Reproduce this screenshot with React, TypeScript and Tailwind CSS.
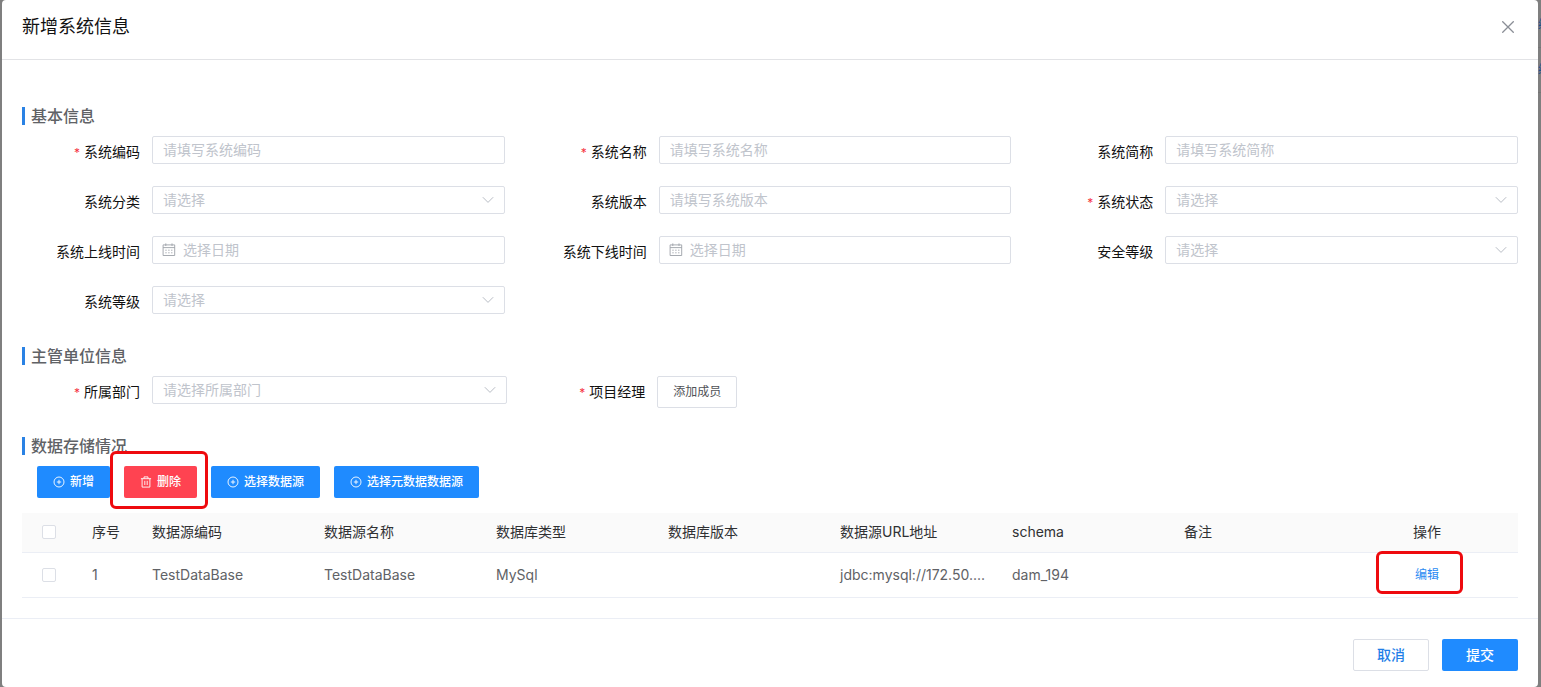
import type { ReactNode } from 'react'

type Field = {
  id: string
  label: string
  type: 'input' | 'select' | 'date'
  placeholder: string
  required?: boolean
}

const basicFields: Field[] = [
  { id: 'code', label: '系统编码', type: 'input', placeholder: '请填写系统编码', required: true },
  { id: 'name', label: '系统名称', type: 'input', placeholder: '请填写系统名称', required: true },
  { id: 'short', label: '系统简称', type: 'input', placeholder: '请填写系统简称' },
  { id: 'category', label: '系统分类', type: 'select', placeholder: '请选择' },
  { id: 'version', label: '系统版本', type: 'input', placeholder: '请填写系统版本' },
  { id: 'status', label: '系统状态', type: 'select', placeholder: '请选择', required: true },
  { id: 'online', label: '系统上线时间', type: 'date', placeholder: '选择日期' },
  { id: 'offline', label: '系统下线时间', type: 'date', placeholder: '选择日期' },
  { id: 'safety', label: '安全等级', type: 'select', placeholder: '请选择' },
  { id: 'level', label: '系统等级', type: 'select', placeholder: '请选择' },
]

const columns = ['数据源编码', '数据源名称', '数据库类型', '数据库版本', '数据源URL地址', 'schema', '备注']

const rows = [
  ['TestDataBase', 'TestDataBase', 'MySql', '', 'jdbc:mysql://172.50....', 'dam_194', ''],
]

function PlusIcon() {
  return (
    <svg className="h-3 w-3" viewBox="0 0 12 12" fill="none" stroke="currentColor" strokeWidth="0.9">
      <circle cx="6" cy="6" r="5" />
      <path d="M6 3.8v4.4M3.8 6h4.4" />
    </svg>
  )
}

function TrashIcon() {
  return (
    <svg className="h-3 w-3" viewBox="0 0 12 12" fill="none" stroke="currentColor" strokeWidth="0.9">
      <path d="M0.9 2.7h10.2M4 2.7V0.9h4v1.8M2.1 2.7v8.4h7.8V2.7M4.8 4.8v4.2M7.2 4.8v4.2" />
    </svg>
  )
}

function CalendarIcon() {
  return (
    <svg className="pointer-events-none absolute top-[7px] left-[10px] h-[14px] w-[14px] text-[#9da1a8]" viewBox="0 0 14 14" fill="none" stroke="currentColor">
      <path d="M1.1 1.9h11.6v10.6H1.1zM1.1 4.6h11.6M3.8 0.4v2.6M10 0.4v2.6" strokeWidth="0.9" />
      <path d="M3.4 7.2h1.2M6.3 7.2h1.2M9.2 7.2h1.2M3.4 9.8h1.2M6.3 9.8h1.2M9.2 9.8h1.2" />
    </svg>
  )
}

function ChevronIcon() {
  return (
    <svg className="pointer-events-none absolute top-2 right-[11px] h-3 w-3 text-[#b8bcc4]" viewBox="0 0 12 12" fill="none" stroke="currentColor">
      <path d="M0.8 3.2l5.2 5.2 5.2-5.2" />
    </svg>
  )
}

function Control({ field }: { field: Field }) {
  const base = 'block h-7 w-full rounded-[2px] border border-[#dcdfe6] bg-white pr-[10px] text-sm outline-none'

  if (field.type === 'select') {
    return (
      <div className="relative flex-1">
        <select id={field.id} className={`${base} appearance-none pl-[10px] text-[#c0c4cc]`}>
          <option>{field.placeholder}</option>
        </select>
        <ChevronIcon />
      </div>
    )
  }
  if (field.type === 'date') {
    return (
      <div className="relative flex-1">
        <input id={field.id} type="text" placeholder={field.placeholder} className={`${base} pb-0.5 pl-[30px] placeholder:text-[#c0c4cc]`} />
        <CalendarIcon />
      </div>
    )
  }
  return (
    <div className="flex-1">
      <input id={field.id} type="text" placeholder={field.placeholder} className={`${base} pb-0.5 pl-[10px] placeholder:text-[#c0c4cc]`} />
    </div>
  )
}

function FormItem({ id, label, required, children }: { id: string; label: string; required?: boolean; children: ReactNode }) {
  return (
    <div className="flex min-h-8 items-start gap-3">
      <label htmlFor={id} className="w-[118px] shrink-0 text-right text-sm leading-8 text-[#111111]">
        {required && <span className="mr-1 text-xs text-[#f5333f]">*</span>}
        {label}
      </label>
      {children}
    </div>
  )
}

function SectionTitle({ children }: { children: ReactNode }) {
  return (
    <div className="flex h-10 items-center gap-1.5">
      <span className="h-[18px] w-[3px] bg-[#2a82e4]" />
      <h2 className="text-base font-medium text-[#606266]">{children}</h2>
    </div>
  )
}

// Red frame drawn around the highlighted action
function Highlight({ className }: { className: string }) {
  return <span className={`pointer-events-none absolute rounded-[6px] border-3 border-[#ee0a0e] ${className}`} />
}

export default function App() {
  const primary = 'flex h-8 items-center gap-[5px] rounded-[2px] bg-[#1f8bff] px-4 text-xs font-medium text-white'
  const checkbox = 'block h-[14px] w-[14px] appearance-none rounded-[2px] border border-[#dcdfe6] bg-white'

  return (
    <div className="flex min-h-screen bg-[#7f7f7f] pl-0.5 font-['Inter','Noto_Sans_CJK_SC',sans-serif]">
      <div role="dialog" aria-label="新增系统信息" className="min-w-0 flex-1 rounded bg-white">
        <header className="flex h-[60px] items-center justify-between border-b border-[#e2e3e6] px-5 pb-1.5">
          <h1 className="text-lg text-[#111111]">新增系统信息</h1>
          <button type="button" aria-label="关闭" className="p-1 text-[#8a8e96]">
            <svg className="h-3 w-3" viewBox="0 0 12 12" fill="none" stroke="currentColor" strokeWidth="1.3">
              <path d="M0.3 0.3l11.4 11.4M11.7 0.3L0.3 11.7" />
            </svg>
          </button>
        </header>

        <main className="px-5 pt-9 pb-5">
          <section className="mb-[18px]">
            <SectionTitle>基本信息</SectionTitle>
            <div className="grid grid-cols-3 gap-x-6 gap-y-[18px]">
              {basicFields.map((field) => (
                <FormItem key={field.id} id={field.id} label={field.label} required={field.required}>
                  <Control field={field} />
                </FormItem>
              ))}
            </div>
          </section>

          <section className="mb-[18px]">
            <SectionTitle>主管单位信息</SectionTitle>
            <div className="grid grid-cols-3 gap-x-5">
              <FormItem id="dept" label="所属部门" required>
                <Control field={{ id: 'dept', label: '所属部门', type: 'select', placeholder: '请选择所属部门' }} />
              </FormItem>
              <FormItem id="manager" label="项目经理" required>
                <button id="manager" type="button" className="h-8 rounded-[2px] border border-[#dcdfe6] px-[15px] text-xs text-[#505256]">
                  添加成员
                </button>
              </FormItem>
            </div>
          </section>

          <section>
            <SectionTitle>数据存储情况</SectionTitle>
            <div className="mb-[15px] flex gap-[14px] pl-[15px]">
              <button type="button" className={primary}>
                <PlusIcon />
                新增
              </button>
              <div className="relative">
                <button type="button" className="flex h-8 items-center gap-[5px] rounded-[2px] bg-[#ff4351] px-4 text-xs font-medium text-white">
                  <TrashIcon />
                  删除
                </button>
                <Highlight className="-top-[15px] -right-[11px] -bottom-[11px] -left-[14px]" />
              </div>
              <button type="button" className={primary}>
                <PlusIcon />
                选择数据源
              </button>
              <button type="button" className={primary}>
                <PlusIcon />
                选择元数据数据源
              </button>
            </div>

            <table className="w-full table-fixed text-left text-sm">
              <thead>
                <tr className="h-[39px] border-b border-[#ebeef5] bg-[#fafafa] text-[#303133]">
                  <th className="w-[60px] pl-5">
                    <input type="checkbox" aria-label="全选" className={checkbox} />
                  </th>
                  <th className="w-[60px] px-[10px] font-normal">序号</th>
                  {columns.map((name) => (
                    <th key={name} className="px-[10px] font-normal">{name}</th>
                  ))}
                  <th className="w-[172px] pr-[10px] text-center font-normal">操作</th>
                </tr>
              </thead>
              <tbody>
                {rows.map((row, index) => (
                  <tr key={index} className="h-[45px] border-b border-[#ebeef5] text-[#606266]">
                    <td className="pl-5">
                      <input type="checkbox" aria-label={`选择第${index + 1}行`} className={checkbox} />
                    </td>
                    <td className="px-[10px]">{index + 1}</td>
                    {row.map((cell, i) => (
                      <td key={i} className="truncate px-[10px]">{cell}</td>
                    ))}
                    <td className="pr-[10px] pb-0.5 text-center">
                      <div className="relative inline-block">
                        <button type="button" className="block text-xs text-[#2a8bf2]">编辑</button>
                        <Highlight className="-top-4 -right-6 -bottom-[11px] -left-[39px]" />
                      </div>
                    </td>
                  </tr>
                ))}
              </tbody>
            </table>
          </section>
        </main>

        <footer className="flex justify-end gap-[13px] border-t border-[#ebeef5] px-5 pt-5 pb-4">
          <button type="button" className="h-8 w-[76px] rounded-[2px] border border-[#dcdfe6] text-sm font-medium text-[#1f7fe8]">取消</button>
          <button type="button" className="h-8 w-[76px] rounded-[2px] bg-[#1f8bff] text-sm font-medium text-white">提交</button>
        </footer>
      </div>

      {/* Sliver of the list page behind the dialog */}
      <div className="w-[3px] shrink-0 overflow-hidden pt-[3px] text-xs text-[#1c4f8c]">
        <div className="flex h-[45px] w-10 items-center border-b border-[#757575]">编辑</div>
        <div className="flex h-[45px] w-10 items-center border-b border-[#757575]">编辑</div>
      </div>
    </div>
  )
}
